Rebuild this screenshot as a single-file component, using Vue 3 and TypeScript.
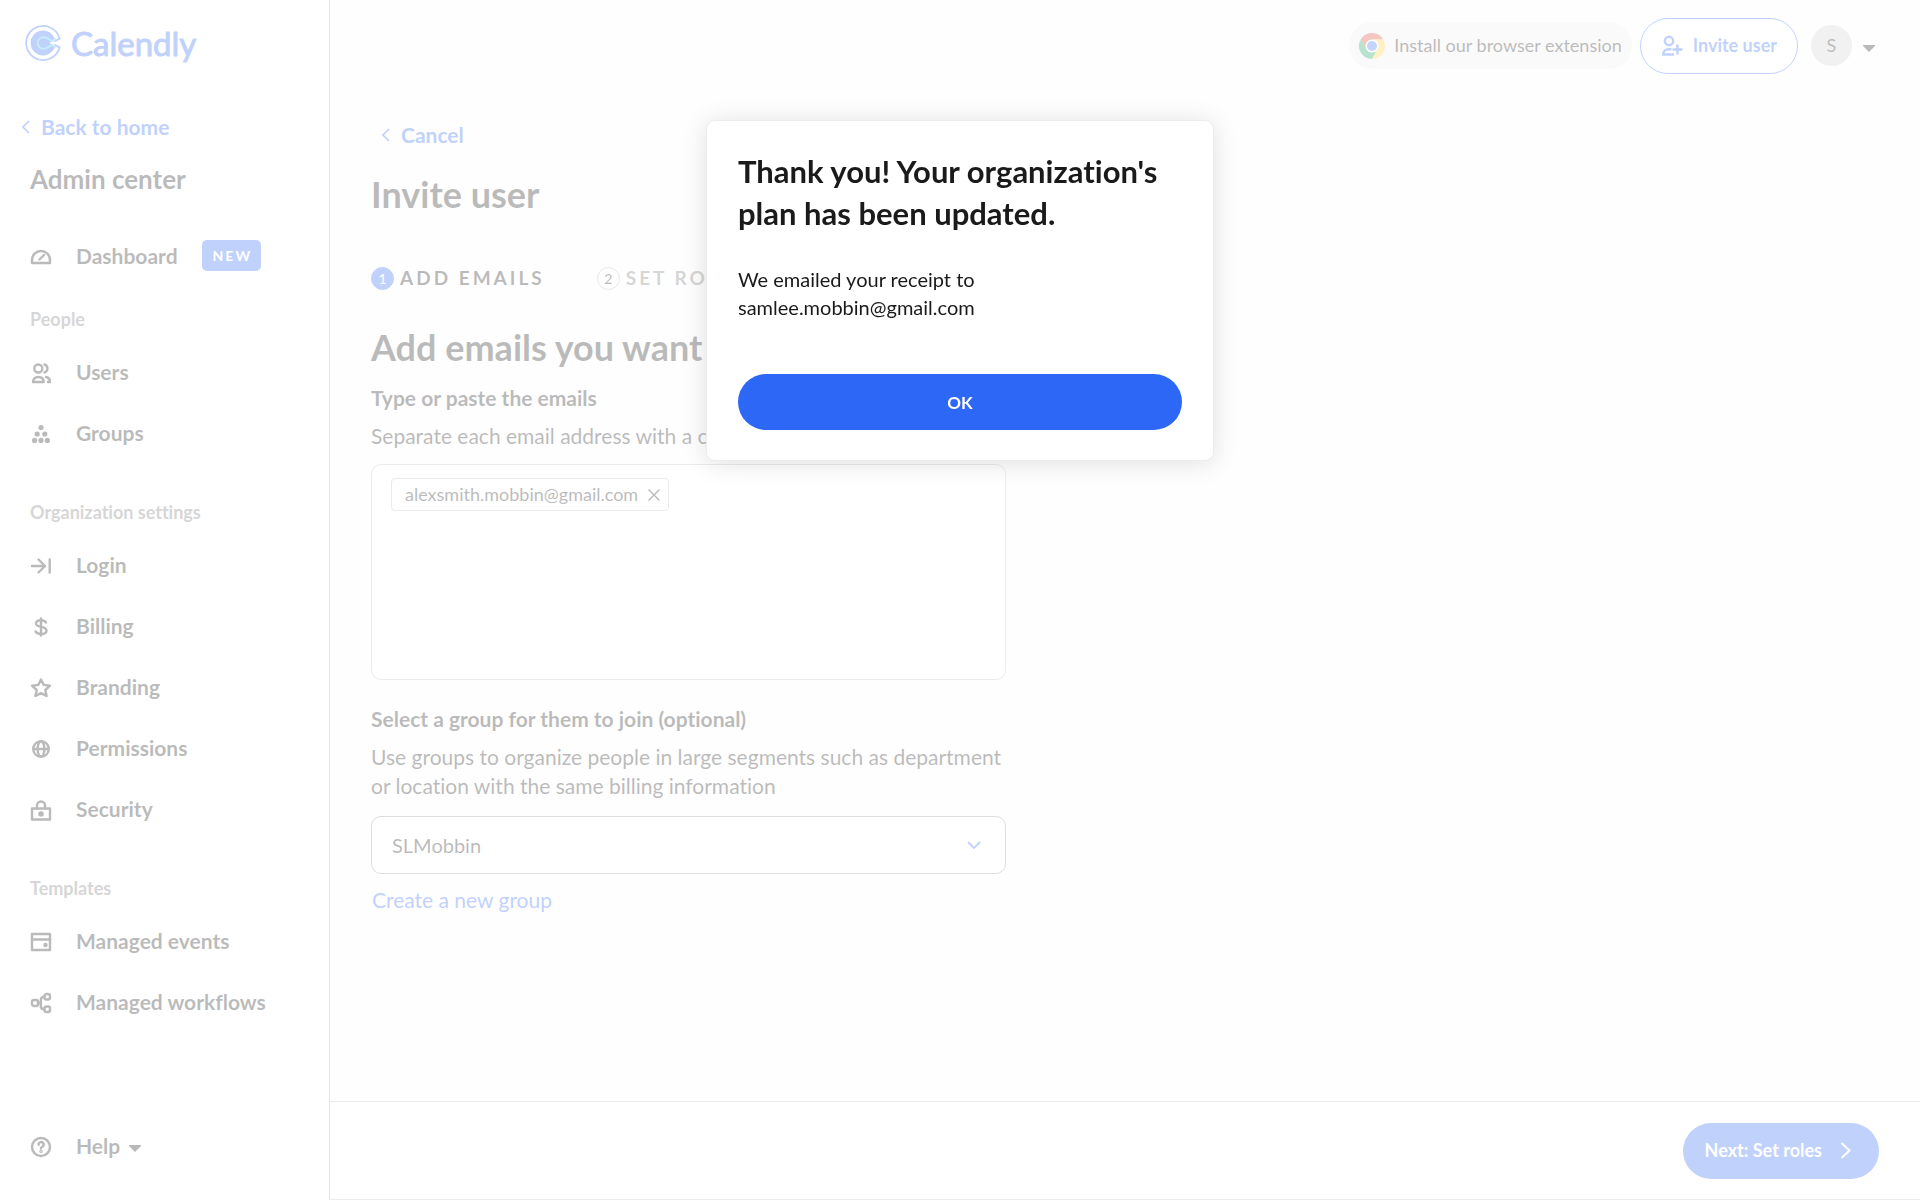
<script setup lang="ts">
import { ref } from 'vue'

interface NavItem {
  label: string
  icon: string
  badge?: string
}

interface NavSection {
  title?: string
  items: NavItem[]
}

// Line icons on a 22 x 22 grid, keyed by name.
const icons: Record<string, string> = {
  dashboard: '<path d="M2 17v-3a9 9 0 0 1 18 0v3z"/><path d="M9.5 13.500l4.500-4.500"/>',
  users:
    '<circle cx="8.300" cy="6.500" r="4"/><path d="M3 20c0-3 2-5 5.300-5s5.300 2 5.300 5z"/><path d="M14.500 2.500a4.200 4.200 0 0 1 0 8"/><path d="M16 15c2.500.5 4 2 4 5h-2"/>',
  groups:
    '<g fill="currentColor" stroke="none"><circle cx="11" cy="4.500" r="2.600"/><circle cx="7.200" cy="11" r="2.600"/><circle cx="14.800" cy="11" r="2.600"/><circle cx="4.600" cy="17.400" r="2.600"/><circle cx="11" cy="17.400" r="2.600"/><circle cx="17.400" cy="17.400" r="2.600"/></g>',
  login: '<path d="M2 11h13M8.500 4.500L15 11l-6.500 6.500M19.700 4.500v13"/>',
  billing:
    '<path d="M11 2.500v17"/><path d="M16 6.500c-1-1.700-3-2.300-5-2.300-3 0-5 1.200-5 3.300 0 4.800 10.500 2 10.500 7 0 2.300-2.300 3.500-5.500 3.500-2.300 0-4.400-.8-5.500-2.500"/>',
  branding:
    '<path d="M11 2.500l2.700 5.400 6.300.8-4.700 4.300 1.300 6-5.600-2.900L5.400 19l1.300-6L2 8.700l6.300-.8z"/>',
  permissions:
    '<circle cx="11" cy="11" r="7.800"/><ellipse cx="11" cy="11" rx="3.400" ry="7.800"/><path d="M3.500 11h15"/>',
  security:
    '<rect x="2" y="9.500" width="18" height="11"/><path d="M7 9.500v-3a4 4 0 0 1 8 0v3"/><circle cx="11" cy="15" r="1.600" fill="currentColor"/>',
  events:
    '<rect x="2" y="3" width="18" height="16"/><path d="M2 8.500h18"/><circle cx="15.500" cy="14" r="1" fill="currentColor"/>',
  workflows:
    '<rect x="2" y="8" width="6" height="6" rx="2"/><rect x="14.500" y="2" width="5.500" height="5.500" rx="2"/><rect x="14.500" y="14.500" width="5.500" height="5.500" rx="2"/><path d="M14.500 4.700c-2.600 0-3.700 1.300-3.700 3.300v6c0 2 1.100 3.300 3.700 3.300M8 11h2.500"/>',
  help:
    '<circle cx="11" cy="11" r="9"/><path d="M8.600 8.700a2.500 2.500 0 1 1 3.700 2.100c-.9.500-1.300.9-1.300 1.800"/><circle cx="11" cy="15.400" r=".5" fill="currentColor"/>',
}

const sections: NavSection[] = [
  { items: [{ label: 'Dashboard', icon: 'dashboard', badge: 'NEW' }] },
  {
    title: 'People',
    items: [
      { label: 'Users', icon: 'users' },
      { label: 'Groups', icon: 'groups' },
    ],
  },
  {
    title: 'Organization settings',
    items: [
      { label: 'Login', icon: 'login' },
      { label: 'Billing', icon: 'billing' },
      { label: 'Branding', icon: 'branding' },
      { label: 'Permissions', icon: 'permissions' },
      { label: 'Security', icon: 'security' },
    ],
  },
  {
    title: 'Templates',
    items: [
      { label: 'Managed events', icon: 'events' },
      { label: 'Managed workflows', icon: 'workflows' },
    ],
  },
]

const steps = ['ADD EMAILS', 'SET ROLES']
const emails = ref<string[]>(['alexsmith.mobbin@gmail.com'])
const draft = ref('')
const group = ref('SLMobbin')
const modalOpen = ref(true)

function removeEmail(email: string) {
  emails.value = emails.value.filter((e) => e !== email)
}
</script>

<template>
  <div class="page">
    <aside class="sidebar">
      <a class="logo" href="#">
        <svg width="36" height="36" viewBox="0 0 36 36" fill="none" aria-hidden="true">
          <circle cx="18" cy="18" r="12.400" fill="#2c67f6" />
          <path d="M24 18l12-5v10z" fill="#fff" />
          <path d="M30 16l4.600-2.400A17 17 0 1 0 34.600 22.400L30 20" stroke="#2c67f6" stroke-width="1.800" stroke-linejoin="round" stroke-linecap="round" />
          <path d="M31 14l-4 1.800c-2.500 0-3.500-3.600-8.500-3.600a5.800 5.800 0 0 0 0 11.600c5 0 6-3.600 8.500-3.600l4 1.800" stroke="#3cc4f8" stroke-width="2" stroke-linejoin="round" />
        </svg>
        <span>Calendly</span>
      </a>
      <a class="back" href="#">
        <svg width="8" height="14" viewBox="0 0 8 14" fill="none" stroke="currentColor" stroke-width="1.600" aria-hidden="true"><path d="M7 1L1 7l6 6" /></svg>
        Back to home
      </a>
      <h2 class="center-title">Admin center</h2>
      <nav>
        <section v-for="(section, i) in sections" :key="i" class="section">
          <h3 v-if="section.title" class="section-title">{{ section.title }}</h3>
          <a v-for="item in section.items" :key="item.label" class="nav-item" href="#">
            <svg class="icon" viewBox="0 0 22 22" aria-hidden="true" v-html="icons[item.icon]" />
            <span>{{ item.label }}</span>
            <span v-if="item.badge" class="badge">{{ item.badge }}</span>
          </a>
        </section>
      </nav>
      <button type="button" class="nav-item help">
        <svg class="icon" viewBox="0 0 22 22" aria-hidden="true" v-html="icons.help" />
        <span>Help</span>
        <svg class="caret" viewBox="0 0 12 7" aria-hidden="true"><path d="M0 0h12v1L6 7 0 1z" fill="currentColor" /></svg>
      </button>
    </aside>

    <div class="column">
      <header class="topbar">
        <a class="extension" href="#">
          <svg width="26" height="26" viewBox="0 0 24 24" aria-hidden="true">
            <path d="M1.600 6A12 12 0 0 1 22.400 6H12a6 6 0 0 0-5.200 9z" fill="#db4437" />
            <path d="M1.600 6A12 12 0 0 0 12 24l5.200-9a6 6 0 0 1-10.400 0z" fill="#0f9d58" />
            <path d="M22.400 6A12 12 0 0 1 12 24l5.200-9A6 6 0 0 0 12 6z" fill="#ffcd40" />
            <circle cx="12" cy="12" r="5.500" fill="#fff" />
            <circle cx="12" cy="12" r="4.600" fill="#3b6ff0" />
          </svg>
          Install our browser extension
        </a>
        <button type="button" class="invite">
          <svg width="22" height="22" viewBox="0 0 22 22" fill="none" stroke="currentColor" stroke-width="2.400" aria-hidden="true">
            <circle cx="8" cy="6" r="4.200" />
            <path d="M13 19.500H2.200c0-3.500 2.300-5.300 5.300-5.300h3" />
            <path d="M11.500 14.500h10M16.500 9.500v10" />
          </svg>
          Invite user
        </button>
        <button type="button" class="account" aria-label="Account">
          <span class="avatar">S</span>
          <svg class="caret" viewBox="0 0 12 7" aria-hidden="true"><path d="M0 0h12v1L6 7 0 1z" fill="currentColor" /></svg>
        </button>
      </header>

      <main class="content">
        <a class="cancel" href="#">
          <svg width="8" height="14" viewBox="0 0 8 14" fill="none" stroke="currentColor" stroke-width="1.600" aria-hidden="true"><path d="M7 1L1 7l6 6" /></svg>
          Cancel
        </a>
        <h1>Invite user</h1>
        <ol class="steps">
          <li v-for="(step, i) in steps" :key="step" :class="{ active: i === 0 }">
            <span class="num">{{ i + 1 }}</span>
            <span class="step-label">{{ step }}</span>
          </li>
        </ol>
        <h1 class="subheading">Add emails you want</h1>
        <label class="label" for="emails">Type or paste the emails</label>
        <p class="hint">Separate each email address with a comma</p>
        <div class="emails">
          <span v-for="email in emails" :key="email" class="chip">
            {{ email }}
            <button type="button" :aria-label="'Remove ' + email" @click="removeEmail(email)">
              <svg width="12" height="12" viewBox="0 0 12 12" stroke="currentColor" stroke-width="1.400" aria-hidden="true"><path d="M.5.5l11 11M11.500.5l-11 11" /></svg>
            </button>
          </span>
          <textarea id="emails" v-model="draft"></textarea>
        </div>
        <label class="label group-label" for="group">Select a group for them to join (optional)</label>
        <p class="hint">Use groups to organize people in large segments such as department or location with the same billing information</p>
        <div class="select">
          <select id="group" v-model="group">
            <option>SLMobbin</option>
          </select>
          <svg width="14" height="9" viewBox="0 0 14 9" fill="none" stroke="#2c67f6" stroke-width="1.800" aria-hidden="true"><path d="M1 1l6 6 6-6" /></svg>
        </div>
        <a class="create" href="#">Create a new group</a>
      </main>

      <footer class="footer">
        <button type="button" class="next">
          Next: Set roles
          <svg width="11" height="17" viewBox="0 0 11 17" fill="none" stroke="currentColor" stroke-width="2" aria-hidden="true"><path d="M1.500 1l8 7.500-8 7.500" /></svg>
        </button>
      </footer>
    </div>

    <div v-if="modalOpen" class="backdrop">
      <div class="modal" role="dialog" aria-modal="true" aria-labelledby="modal-title">
        <h2 id="modal-title">Thank you! Your organization's plan has been updated.</h2>
        <p>We emailed your receipt to<br />samlee.mobbin@gmail.com</p>
        <button type="button" class="ok" @click="modalOpen = false">OK</button>
      </div>
    </div>
  </div>
</template>

<style>
body {
  margin: 0;
}
</style>

<style scoped>
* {
  box-sizing: border-box;
}
h1,
h2,
h3,
p,
ol {
  margin: 0;
  padding: 0;
}
a {
  color: inherit;
  text-decoration: none;
}
button,
select,
textarea {
  font: inherit;
  color: inherit;
  border: 0;
  padding: 0;
  background: none;
}
button {
  cursor: pointer;
}
.page {
  display: flex;
  min-height: 100vh;
  font-family: Lato, 'Liberation Sans', sans-serif;
  font-size: 21px;
  line-height: 29px;
  color: #1a1a1a;
  background: #fafafa;
}
.page * {
  font-variant-ligatures: none;
}

/* Sidebar */
.sidebar {
  flex: 0 0 330px;
  display: flex;
  flex-direction: column;
  padding: 25px 0 24px;
  border-right: 1px solid #b0b0b0;
  background: #fdfdfd;
}
.logo {
  display: flex;
  align-items: center;
  gap: 10px;
  height: 36px;
  padding-left: 25px;
  color: #2c67f6;
  font-size: 33px;
  -webkit-text-stroke: 1px #2c67f6;
}
.back {
  display: flex;
  align-items: center;
  gap: 11px;
  margin-top: 51px;
  padding-left: 22px;
  color: #2c67f6;
  font-weight: 700;
}
.center-title {
  margin-top: 22px;
  padding-left: 30px;
  font-size: 26px;
  line-height: 32px;
}
nav {
  margin-top: 30px;
}
.section-title {
  padding: 37px 30px 10px;
  font-size: 18px;
  line-height: 24px;
  color: #757575;
}
.section:nth-child(2) .section-title {
  padding-top: 21px;
}
.nav-item {
  display: flex;
  align-items: center;
  height: 61px;
  padding-left: 30px;
  font-weight: 700;
}
.icon {
  flex: none;
  width: 22px;
  height: 22px;
  margin: 3px 24px 0 0;
  fill: none;
  stroke: currentColor;
  stroke-width: 2.4;
  stroke-linejoin: round;
  stroke-linecap: round;
}
.badge {
  margin-left: 24px;
  padding: 0 9px 0 11px;
  border-radius: 5px;
  background: #2c67f6;
  color: #fff;
  font-size: 14px;
  line-height: 31px;
  letter-spacing: 2px;
}
.help {
  margin-top: auto;
}
.caret {
  width: 12px;
  height: 7px;
  margin-top: 5px;
}
.help .caret {
  margin-left: 9px;
}

/* Top bar */
.column {
  flex: 1;
  min-width: 0;
  display: flex;
  flex-direction: column;
}
.topbar {
  display: flex;
  align-items: center;
  justify-content: flex-end;
  height: 91px;
  padding-right: 45px;
  font-size: 18px;
}
.extension {
  display: flex;
  align-items: center;
  gap: 9px;
  height: 47px;
  margin-right: 8px;
  padding: 0 10px;
  border-radius: 24px;
  background: #efefef;
}
.invite {
  display: flex;
  align-items: center;
  gap: 10px;
  height: 56px;
  margin-right: 13px;
  padding: 0 20px;
  border: 1px solid #2c67f6;
  border-radius: 28px;
  background: #fff;
  color: #2c67f6;
  font-weight: 700;
}
.account {
  display: flex;
  align-items: center;
  gap: 11px;
}
.avatar {
  width: 41px;
  border-radius: 50%;
  background: #d0d0d0;
  line-height: 41px;
}

/* Form */
.content {
  display: flex;
  flex-direction: column;
  align-items: flex-start;
  width: 100%;
  max-width: 676px;
  padding: 29px 0 30px 41px;
}
.cancel {
  display: flex;
  align-items: center;
  gap: 11px;
  padding-left: 11px;
  color: #2c67f6;
  font-weight: 700;
}
h1 {
  margin-top: 23px;
  font-size: 36px;
  line-height: 44px;
}
.steps {
  display: flex;
  gap: 52px;
  margin-top: 50px;
  list-style: none;
}
.steps li {
  display: flex;
  align-items: center;
  gap: 6px;
  color: #757575;
}
.steps .active {
  color: #1a1a1a;
}
.num {
  width: 23px;
  border: 1px solid #b0b0b0;
  border-radius: 50%;
  color: #1a1a1a;
  font-size: 14px;
  line-height: 21px;
  text-align: center;
}
.active .num {
  border-color: #2c67f6;
  background: #2c67f6;
  color: #fff;
}
.step-label {
  font-size: 19px;
  line-height: 24px;
  font-weight: 700;
  letter-spacing: 3px;
}
.subheading {
  margin-top: 35px;
}
.label {
  margin-top: 14px;
  font-weight: 700;
}
.hint {
  margin-top: 9px;
}
.emails {
  display: flex;
  flex-direction: column;
  align-items: flex-start;
  width: 100%;
  height: 216px;
  margin-top: 14px;
  padding: 13px 19px;
  border: 1px solid #bbb;
  border-radius: 10px;
  background: #fdfdfd;
}
.chip {
  display: flex;
  align-items: center;
  gap: 10px;
  padding: 0 8px 0 13px;
  border: 1px solid #bbb;
  border-radius: 4px;
  font-size: 18px;
  line-height: 31px;
}
.chip button {
  display: flex;
}
.emails textarea {
  flex: 1;
  width: 100%;
  resize: none;
  outline: none;
}
.group-label {
  margin-top: 24px;
}
.select {
  position: relative;
  width: 100%;
  margin-top: 16px;
}
.select select {
  display: block;
  width: 100%;
  height: 58px;
  padding: 0 20px;
  border: 1px solid #909090;
  border-radius: 10px;
  background: #fff;
  font-size: 20px;
  appearance: none;
}
.select svg {
  position: absolute;
  top: 25px;
  right: 25px;
  pointer-events: none;
}
.create {
  margin-top: 11px;
  padding-left: 1px;
  color: #2c67f6;
}

/* Footer */
.footer {
  display: flex;
  align-items: center;
  justify-content: flex-end;
  height: 99px;
  margin-top: auto;
  padding-right: 41px;
  border: solid #c0c0c0;
  border-width: 1px 0;
  background: #fdfdfd;
}
.next {
  display: flex;
  align-items: center;
  gap: 18px;
  height: 56px;
  padding: 0 28px 0 22px;
  border-radius: 28px;
  background: #2c67f6;
  color: #fff;
  font-size: 18px;
  font-weight: 700;
}

/* Confirmation dialog */
.backdrop {
  position: fixed;
  inset: 0;
  display: flex;
  align-items: flex-start;
  justify-content: center;
  padding-top: 120px;
  background: rgba(255, 255, 255, 0.7);
}
.modal {
  width: 508px;
  padding: 29px 31px 30px;
  border: 1px solid #ececec;
  border-radius: 9px;
  background: #fff;
  box-shadow: 0 2px 26px rgba(0, 0, 0, 0.12);
}
.modal h2 {
  font-size: 31px;
  line-height: 42px;
}
.modal p {
  margin-top: 31px;
  font-size: 20px;
  line-height: 28px;
}
.ok {
  width: 100%;
  height: 56px;
  margin-top: 53px;
  border-radius: 28px;
  background: #2c67f6;
  color: #fff;
  font-size: 17px;
  font-weight: 700;
}
</style>
